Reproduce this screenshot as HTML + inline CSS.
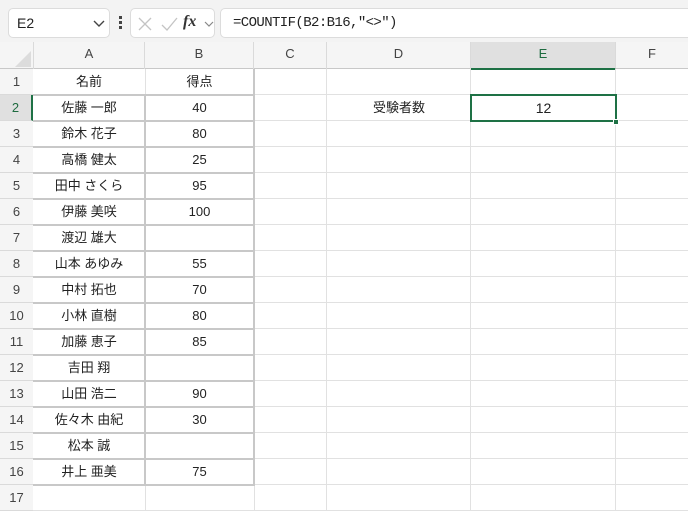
<!DOCTYPE html>
<html><head><meta charset="utf-8"><style>
*{margin:0;padding:0;box-sizing:border-box}
body{width:688px;height:510px;overflow:hidden;background:#fff;font-family:"Liberation Sans","Noto Sans CJK JP",sans-serif;position:relative;color:#222}
.a{position:absolute}
.box{position:absolute;background:#fff;border:1px solid #dcdcdc;border-radius:5px}
.ch{position:absolute;top:42px;height:27px;line-height:24px;text-align:center;font-size:13px;color:#444;border-right:1px solid #dadada}
.rh{position:absolute;left:0;width:33px;height:26px;line-height:26px;text-align:center;font-size:13px;color:#444;background:#f5f5f5;border-bottom:1px solid #dadada}
.c{position:absolute;height:26px;line-height:26px;text-align:center;font-size:13px;color:#222}
</style></head><body>
<div class="a" style="left:0;top:0;width:688px;height:42px;background:#f3f3f3"></div>
<div class="box" style="left:8px;top:8px;width:102px;height:30px"><span class="a" style="left:8px;top:6px;font-size:14px">E2</span>
<svg class="a" style="left:84px;top:11px" width="12" height="8"><path d="M1 1 L6 6 L11 1" stroke="#444" stroke-width="1.4" fill="none"/></svg></div>
<div class="a" style="left:119px;top:16px;width:3px;height:3px;background:#444"></div>
<div class="a" style="left:119px;top:21px;width:3px;height:3px;background:#444"></div>
<div class="a" style="left:119px;top:26px;width:3px;height:3px;background:#444"></div>
<div class="box" style="left:130px;top:8px;width:85px;height:30px">
<svg class="a" style="left:6px;top:7px" width="78" height="16"><path d="M2 2 L14 14 M14 2 L2 14" stroke="#c4c4c4" stroke-width="1.3"/><path d="M25 9 L30 14 L40 2" stroke="#c4c4c4" stroke-width="1.3" fill="none"/><path d="M68 6 L72 10 L76 6" stroke="#888" stroke-width="1.2" fill="none"/></svg>
<span class="a" style="left:52px;top:4px;font-family:'Liberation Serif',serif;font-style:italic;font-weight:bold;font-size:16px;color:#333">fx</span></div>
<div class="box" style="left:220px;top:8px;width:480px;height:30px"><span class="a" style="left:12px;top:6px;font-size:14px;font-family:'Liberation Mono',monospace;letter-spacing:-0.6px">=COUNTIF(B2:B16,"&lt;&gt;")</span></div>
<div class="a" style="left:0;top:42px;width:688px;height:27px;background:#f5f5f5;border-bottom:1px solid #c8c8c8"></div>
<svg class="a" style="left:14px;top:50px" width="18" height="18"><path d="M17 1 L17 17 L1 17 Z" fill="#dcdcdc"/></svg>
<div class="ch" style="left:33px;width:112px;border-left:1px solid #dadada">A</div>
<div class="ch" style="left:145px;width:109px">B</div>
<div class="ch" style="left:254px;width:73px">C</div>
<div class="ch" style="left:327px;width:144px">D</div>
<div class="ch" style="left:471px;width:145px;background:#e0e0e0;color:#1e6b40;border-bottom:2px solid #1e7145;height:28px">E</div>
<div class="ch" style="left:616px;width:72px;border-right:none">F</div>
<!-- grid -->
<div class="a" style="left:33px;top:69px;width:655px;height:442px;
background-image:repeating-linear-gradient(to bottom,transparent 0,transparent 25px,#e1e1e1 25px,#e1e1e1 26px)"></div>
<div class="a" style="left:145px;top:69px;width:1px;height:442px;background:#e1e1e1"></div>
<div class="a" style="left:254px;top:69px;width:1px;height:442px;background:#e1e1e1"></div>
<div class="a" style="left:326px;top:69px;width:1px;height:442px;background:#e1e1e1"></div>
<div class="a" style="left:470px;top:69px;width:1px;height:442px;background:#e1e1e1"></div>
<div class="a" style="left:615px;top:69px;width:1px;height:442px;background:#e1e1e1"></div>
<!-- table borders -->
<div class="a" style="left:33px;top:94px;width:222px;height:392px;
background-image:repeating-linear-gradient(to bottom,#c8c8c8 0,#c8c8c8 2px,transparent 2px,transparent 26px)"></div>
<div class="a" style="left:144px;top:95px;width:2px;height:390px;background:#c8c8c8"></div>
<div class="a" style="left:253px;top:69px;width:2px;height:416px;background:#c8c8c8"></div>
<div class="a" style="left:0;top:69px;width:33px;height:442px;background:#f5f5f5;border-right:1px solid #c8c8c8"></div>
<div id="rows"></div>
<div class="rh" style="top:69px">1</div>
<div class="rh" style="top:95px;background:#e0e0e0;color:#1e6b40;border-right:2px solid #1e7145">2</div>
<div class="rh" style="top:121px">3</div><div class="rh" style="top:147px">4</div><div class="rh" style="top:173px">5</div><div class="rh" style="top:199px">6</div><div class="rh" style="top:225px">7</div><div class="rh" style="top:251px">8</div><div class="rh" style="top:277px">9</div><div class="rh" style="top:303px">10</div><div class="rh" style="top:329px">11</div><div class="rh" style="top:355px">12</div><div class="rh" style="top:381px">13</div><div class="rh" style="top:407px">14</div><div class="rh" style="top:433px">15</div><div class="rh" style="top:459px">16</div><div class="rh" style="top:485px">17</div>
<div class="c" style="left:33px;width:112px;top:69px">名前</div><div class="c" style="left:145px;width:109px;top:69px">得点</div>
<div class="c" style="left:33px;width:112px;top:95px">佐藤 一郎</div><div class="c" style="left:145px;width:109px;top:95px">40</div>
<div class="c" style="left:33px;width:112px;top:121px">鈴木 花子</div><div class="c" style="left:145px;width:109px;top:121px">80</div>
<div class="c" style="left:33px;width:112px;top:147px">高橋 健太</div><div class="c" style="left:145px;width:109px;top:147px">25</div>
<div class="c" style="left:33px;width:112px;top:173px">田中 さくら</div><div class="c" style="left:145px;width:109px;top:173px">95</div>
<div class="c" style="left:33px;width:112px;top:199px">伊藤 美咲</div><div class="c" style="left:145px;width:109px;top:199px">100</div>
<div class="c" style="left:33px;width:112px;top:225px">渡辺 雄大</div>
<div class="c" style="left:33px;width:112px;top:251px">山本 あゆみ</div><div class="c" style="left:145px;width:109px;top:251px">55</div>
<div class="c" style="left:33px;width:112px;top:277px">中村 拓也</div><div class="c" style="left:145px;width:109px;top:277px">70</div>
<div class="c" style="left:33px;width:112px;top:303px">小林 直樹</div><div class="c" style="left:145px;width:109px;top:303px">80</div>
<div class="c" style="left:33px;width:112px;top:329px">加藤 恵子</div><div class="c" style="left:145px;width:109px;top:329px">85</div>
<div class="c" style="left:33px;width:112px;top:355px">吉田 翔</div>
<div class="c" style="left:33px;width:112px;top:381px">山田 浩二</div><div class="c" style="left:145px;width:109px;top:381px">90</div>
<div class="c" style="left:33px;width:112px;top:407px">佐々木 由紀</div><div class="c" style="left:145px;width:109px;top:407px">30</div>
<div class="c" style="left:33px;width:112px;top:433px">松本 誠</div>
<div class="c" style="left:33px;width:112px;top:459px">井上 亜美</div><div class="c" style="left:145px;width:109px;top:459px">75</div>
<div class="c" style="left:327px;width:144px;top:95px">受験者数</div>
<div class="a" style="left:470px;top:94px;width:147px;height:28px;border:2px solid #1e7145"></div>
<div class="c" style="left:471px;width:145px;top:95px;font-size:14px">12</div>
<div class="a" style="left:613px;top:119px;width:6px;height:6px;background:#1e7145;border:1px solid #fff"></div>
</body></html>
